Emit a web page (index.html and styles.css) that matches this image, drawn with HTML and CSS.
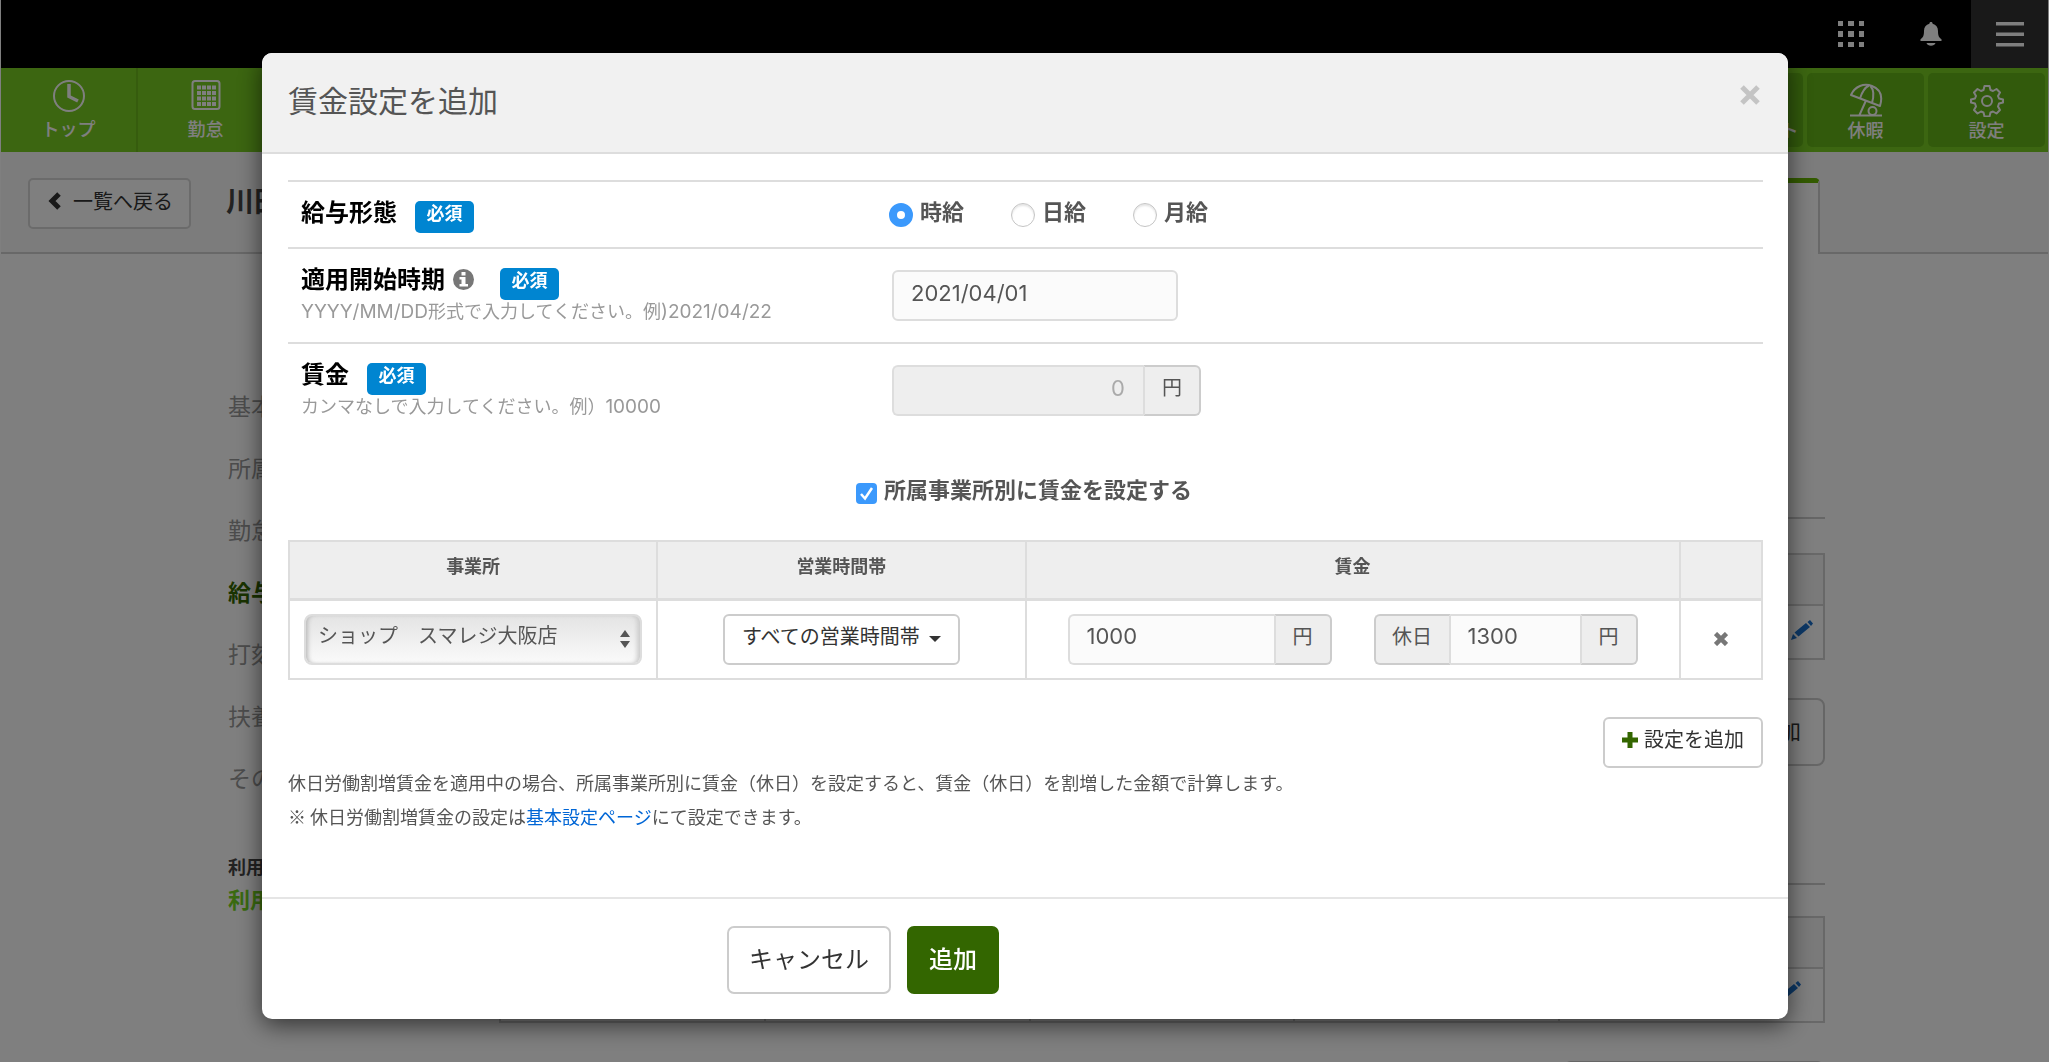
FILE: index.html
```html
<!DOCTYPE html>
<html lang="ja">
<head>
<meta charset="utf-8">
<title>賃金設定を追加</title>
<link rel="stylesheet" href="styles.css">
</head>
<body>
<div class="app">
  <header class="topbar">
    <button class="topbar-btn" type="button" aria-label="アプリ一覧">
      <svg width="26" height="26" viewBox="0 0 26 26" fill="currentColor"><path d="M0 0h5v5H0zM10 0h6v5h-6zM21 0h5v5h-5zM0 10h5v6H0zM10 10h6v6h-6zM21 10h5v6h-5zM0 21h5v5H0zM10 21h6v5h-6zM21 21h5v5h-5z"/></svg>
    </button>
    <button class="topbar-btn" type="button" aria-label="お知らせ">
      <svg width="22" height="24" viewBox="0 0 22 24" fill="currentColor"><path d="M11 0c1 0 1.600.7 1.600 1.700C16 2.500 18 5 18 9c0 4.500.8 6.500 3.500 8.200V19H.5v-1.800C3.200 15.500 4 13.500 4 9c0-4 2-6.500 5.400-7.300C9.400.7 10 0 11 0zM6.500 21h9c-.6 1.700-2.400 2.700-4.500 2.700S7.100 22.700 6.500 21z"/></svg>
    </button>
    <button class="topbar-btn topbar-menu" type="button" aria-label="メニュー">
      <svg width="28" height="25" viewBox="0 0 28 25" fill="currentColor"><path d="M0 0h28v3.500H0zM0 10.500h28V14H0zM0 21h28v3.500H0z"/></svg>
    </button>
  </header>

  <nav class="nav">
    <a class="nav-item" href="#">
      <svg width="34" height="34" viewBox="0 0 34 34" fill="none" stroke="currentColor"><circle cx="17" cy="17" r="15" stroke-width="2"/><path d="M17 5v12.500l9 4.500" stroke-width="3.500"/></svg>
      <span>トップ</span>
    </a>
    <a class="nav-item" href="#">
      <svg width="34" height="34" viewBox="0 0 34 34" fill="none" stroke="currentColor"><rect x="3.500" y="2" width="27" height="28" rx="2.500" stroke-width="2"/><path d="M8 8.500h19M8 14h19M8 19.500h19M8 25h19" stroke-width="4" stroke-dasharray="4 1"/></svg>
      <span>勤怠</span>
    </a>
    <span class="nav-space"></span>
    <a class="nav-item nav-boxed" href="#"><span class="nav-blank"></span><span>プロジェクト</span></a>
    <a class="nav-item nav-boxed" href="#">
      <svg width="34" height="34" viewBox="0 0 34 34" fill="none" stroke="currentColor" stroke-width="2" stroke-linejoin="round"><path d="M2 12C6 3 15 0 23 3s11 10 8 20z"/><path d="M11 15.500C13 9 17 4 20 2.500M23 20c2-7 2-13-1.500-17M17 17.500L10.500 32M1 32.500h32"/><circle cx="23.500" cy="28" r="4"/></svg>
      <span>休暇</span>
    </a>
    <a class="nav-item nav-boxed" href="#">
      <svg width="34" height="34" viewBox="0 0 34 34" fill="none" stroke="currentColor" stroke-width="2" stroke-linejoin="round"><path d="M14.500 3h5l1 4 2.500 1 3.500-2 3.500 3.500-2 3.500 1 2.500 4 1v3l-4 1-1 3 2 3.500-3.500 3.500-3.500-2-2.500 1-1 4h-5l-1-4-2.500-1-3.500 2L4 27l2-3.500-1-3-4-1v-3l4-1L6 13 4 9.500 7.500 6l3.500 2 2.500-1z"/><circle cx="17" cy="18" r="5"/></svg>
      <span>設定</span>
    </a>
  </nav>

  <div class="subhead">
    <button class="back" type="button">
      <svg width="13" height="18" viewBox="0 0 13 18" fill="none" stroke="currentColor" stroke-width="5"><path d="M11 2L4 9l7 7"/></svg>
      一覧へ戻る
    </button>
    <h1 class="person">川田</h1>
    <span class="tab"></span>
  </div>

  <div class="columns">
    <aside class="side">
      <ul class="side-list">
        <li><a href="#">基本情報</a></li>
        <li><a href="#">所属情報</a></li>
        <li><a href="#">勤怠情報</a></li>
        <li><a class="is-current" href="#">給与情報</a></li>
        <li><a href="#">打刻設定</a></li>
        <li><a href="#">扶養情報</a></li>
        <li><a href="#">その他</a></li>
      </ul>
      <p class="side-title">利用状況</p>
      <p class="side-state">利用中</p>
    </aside>
    <main class="content">
      <section class="block">
        <table class="list">
          <thead><tr><th></th><th></th><th></th><th></th><th></th></tr></thead>
          <tbody><tr><td></td><td></td><td></td><td></td><td><svg width="22" height="20" viewBox="0 0 22 20" fill="currentColor"><path d="M0 20l2-6 4 4zM3.500 12.500L15 3l4 4L7.500 16.500zM16.500 2L19 0l3 3.500L20 6z"/></svg></td></tr></tbody>
        </table>
        <button class="outline" type="button">設定を追加</button>
      </section>
      <section class="block">
        <table class="list list-near">
          <thead><tr><th></th><th></th><th></th><th></th><th></th></tr></thead>
          <tbody><tr><td></td><td></td><td></td><td></td><td><svg width="22" height="20" viewBox="0 0 22 20" fill="currentColor"><path d="M0 20l2-6 4 4zM3.500 12.500L15 3l4 4L7.500 16.500zM16.500 2L19 0l3 3.500L20 6z"/></svg></td></tr></tbody>
        </table>
        <button class="outline" type="button" aria-label="追加"></button>
      </section>
    </main>
  </div>
</div>

<div class="overlay">
  <form class="modal" role="dialog" aria-labelledby="modal-title">
    <header class="modal-head">
      <h2 id="modal-title">賃金設定を追加</h2>
      <button class="close" type="button" aria-label="閉じる">
        <svg width="20" height="20" viewBox="0 0 20 20" stroke="currentColor" stroke-width="5"><path d="M2 2l16 16M18 2L2 18"/></svg>
      </button>
    </header>

    <div class="modal-body">
      <div class="row">
        <div>
          <div class="row-title"><span>給与形態</span><span class="badge">必須</span></div>
        </div>
        <div class="radios">
          <label><input type="radio" name="type" checked><span>時給</span></label>
          <label><input type="radio" name="type"><span>日給</span></label>
          <label><input type="radio" name="type"><span>月給</span></label>
        </div>
      </div>
      <div class="row">
        <div>
          <div class="row-title">
            <label for="start">適用開始時期</label>
            <svg class="info" width="21" height="21" viewBox="0 0 21 21"><circle cx="10.500" cy="10.500" r="10.500" fill="#777"/><path d="M8.500 3h4v3.500h-4zM6.500 8h6v7H15v2.500H6.500V15h2v-4.500h-2z" fill="#fff"/></svg>
            <span class="badge">必須</span>
          </div>
          <p class="hint"><span class="num">YYYY/MM/DD</span>形式で入力してください。例<span class="num">)2021/04/22</span></p>
        </div>
        <div class="field"><input class="text date" id="start" type="text" value="2021/04/01"></div>
      </div>
      <div class="row">
        <div>
          <div class="row-title"><label for="wage">賃金</label><span class="badge">必須</span></div>
          <p class="hint">カンマなしで入力してください。例）<span class="num">10000</span></p>
        </div>
        <div class="field">
          <div class="group group-main"><input class="text" id="wage" type="text" value="0" disabled><span class="addon">円</span></div>
        </div>
      </div>

      <label class="check"><input type="checkbox" checked><span>所属事業所別に賃金を設定する</span></label>

      <table class="wages">
        <thead>
          <tr><th class="c-office">事業所</th><th class="c-hours">営業時間帯</th><th class="c-wage">賃金</th><th></th></tr>
        </thead>
        <tbody>
          <tr>
            <td>
              <div class="select">
                <select aria-label="事業所"><option>ショップ　スマレジ大阪店</option></select>
                <svg width="10" height="18" viewBox="0 0 10 18" fill="#555"><path d="M0 7l5-7 5 7zM0 11h10l-5 7z"/></svg>
              </div>
            </td>
            <td class="mid">
              <button class="btn" type="button">すべての営業時間帯<svg width="12" height="6" viewBox="0 0 12 6" fill="currentColor"><path d="M0 0h12L6 6z"/></svg></button>
            </td>
            <td>
              <div class="pair">
                <div class="group"><input class="text" type="text" value="1000" aria-label="賃金"><span class="addon">円</span></div>
                <div class="group"><label class="addon addon-first" for="holiday">休日</label><input class="text" id="holiday" type="text" value="1300"><span class="addon">円</span></div>
              </div>
            </td>
            <td class="mid">
              <button class="remove" type="button" aria-label="削除"><svg width="14" height="14" viewBox="0 0 14 14" stroke="currentColor" stroke-width="4.500"><path d="M1.500 1.500l11 11M12.500 1.500l-11 11"/></svg></button>
            </td>
          </tr>
        </tbody>
      </table>

      <div class="add-row">
        <button class="btn" type="button"><svg class="plus" width="16" height="16" viewBox="0 0 16 16" fill="#360"><path d="M5.500 0h5v5.500H16v5h-5.500V16h-5v-5.500H0v-5h5.500z"/></svg>設定を追加</button>
      </div>
      <div class="notes">
        <p>休日労働割増賃金を適用中の場合、所属事業所別に賃金（休日）を設定すると、賃金（休日）を割増した金額で計算します。</p>
        <p>※ 休日労働割増賃金の設定は<a href="#">基本設定ページ</a>にて設定できます。</p>
      </div>
    </div>

    <footer class="modal-foot">
      <button class="big" type="button">キャンセル</button>
      <button class="big big-primary" type="submit">追加</button>
    </footer>
  </form>
</div>
</body>
</html>
```
FILE: styles.css
```css
* { box-sizing: border-box; }

body {
  margin: 0;
  height: 100vh;
  overflow: hidden;
  color: #555;
  background: #fff;
  font-family: Inter, "Noto Sans CJK JP", sans-serif;
  font-size: 20px;
}

h1, h2, p, ul { margin: 0; padding: 0; }
ul { list-style: none; }
a { text-decoration: none; }
button, input, select { font: inherit; color: inherit; margin: 0; }
button { cursor: pointer; }
svg { display: block; flex: none; }

/* Page behind the dialog */
.app { height: 100vh; overflow: hidden; border-left: 1px solid #fff; border-right: 1px solid #fff; }

.topbar { display: flex; justify-content: flex-end; height: 68px; background: #000; }
.topbar-btn {
  display: flex; align-items: center; justify-content: center;
  width: 80px; padding: 0; border: 0; background: none; color: #fff;
}
.topbar-menu { width: 77px; background: #333; }

.nav { display: flex; gap: 4px; height: 84px; padding-right: 3px; background: #78cc22; }
.nav-item {
  display: flex; flex-direction: column; align-items: center; gap: 4px;
  width: 137px; padding-top: 11px;
  border-right: 2px solid #6cb81c;
  color: #fff; font-size: 18px; font-weight: 500; line-height: 26px;
}
.nav-item + .nav-item { margin-left: -4px; }
.nav-space { flex: 1; }
.nav-item.nav-boxed {
  width: 117px; height: 74px; margin: 5px 0 0;
  padding-top: 10px; gap: 1px;
  border: 0; border-radius: 5px; background: #64b418;
}
.nav-blank { height: 34px; }

.subhead {
  display: flex; align-items: flex-start;
  height: 102px; padding: 26px 0 0 27px;
  background: #f8f8f8; box-shadow: inset 0 -2px #d0d0d0;
}
.back {
  display: flex; align-items: center; gap: 12px;
  width: 163px; height: 51px; padding: 0 0 6px 18px;
  border: 2px solid #d6d6d6; border-radius: 5px;
  background: #fff; color: #333; white-space: nowrap;
}
.person { margin-left: 35px; color: #444; font-size: 28px; line-height: 48px; }
.tab {
  width: 540px; height: 76px; margin-left: auto; margin-right: 228px;
  border-top: 5px solid #66b600; border-right: 2px solid #d0d0d0;
  border-top-right-radius: 5px; background: #fff;
}

.columns { display: flex; }
.side { width: 498px; padding: 122px 0 0 227px; }
.side-list { font-size: 23px; line-height: 62px; }
.side-list a { color: #999; }
.side-list .is-current { color: #360; font-weight: 700; }
.side-title { margin-top: 42px; color: #444; font-size: 18px; font-weight: 700; line-height: 32px; }
.side-state { color: #74d420; font-size: 22px; font-weight: 700; line-height: 32px; }

.content { flex: 1; padding: 263px 223px 0 0; }
.block { display: flex; flex-direction: column; align-items: flex-end; padding: 34px 0 117px; border-top: 2px solid #ccc; }
.list { width: 100%; border-collapse: collapse; table-layout: fixed; }
.list th, .list td { padding: 0; border: 2px solid #d0d0d0; }
.list th { height: 51px; background: #f5f5f5; }
.list td { height: 54px; }
.list td svg { margin: 0 10px 4px auto; color: #1a70cc; }
.block + .block { padding-top: 31px; }
.list-near td svg { margin-right: 22px; margin-bottom: 8px; }
.outline {
  width: 262px; height: 68px; margin-top: 38px; padding: 0 22px 6px;
  border: 2px solid #ccc; border-radius: 8px;
  background: #fff; color: #333; font-size: 22px; text-align: right;
}

/* Dialog */
.overlay {
  position: fixed; inset: 0;
  padding: 53px 261px 43px 262px;
  background: rgba(0, 0, 0, .5);
}
.modal { border-radius: 10px; background: #fff; box-shadow: 0 6px 24px rgba(0, 0, 0, .6); }
.modal-head {
  display: flex; justify-content: space-between; align-items: flex-start;
  height: 101px; padding: 26px 28px 0 26px;
  border-bottom: 2px solid #ddd; border-radius: 10px 10px 0 0;
  background: #f1f1f1;
}
.modal-head h2 { font-size: 30px; font-weight: 400; line-height: 44px; }
.close { display: flex; margin-top: 6px; padding: 0; border: 0; background: none; color: #c4c4c4; }

.modal-body { padding: 26px 25px 67px 26px; }

.row {
  display: grid; grid-template-columns: 588px 1fr;
  padding: 15px 0 14px 13px;
  border-top: 2px solid #ddd;
}
.row-title { display: flex; align-items: flex-start; color: #000; font-size: 24px; font-weight: 700; line-height: 32px; }
.badge {
  width: 59px; height: 32px; margin: 4px 0 0 18px;
  border-radius: 5px; background: #0085d1; color: #fff;
  font-size: 18px; line-height: 26px; text-align: center;
}
.info { margin: 5px 8px 0; }
.hint { padding-bottom: 4px; color: #999; font-size: 18px; line-height: 24px; }
.hint .num { font-size: 19px; }

.radios { display: flex; gap: 47px; color: #555; font-size: 22px; font-weight: 700; line-height: 30px; }
.radios label { display: flex; gap: 7px; }
.radios input {
  appearance: none; width: 24px; height: 24px; margin-top: 6px;
  border: 1px solid #c4c4c4; border-radius: 50%;
  background: #fff; box-shadow: inset 0 2px 2px #e6e6e6;
}
.radios input:checked { border: 8px solid #3b99fc; box-shadow: none; }

.field { padding: 6px 0 0 3px; }
.text {
  height: 51px; min-width: 0; padding: 0 18px 6px 17px;
  border: 2px solid #ddd; border-radius: 6px; background: #fbfbfb; color: #555;
  font-size: 22px;
}
.date { width: 286px; }
.group { display: flex; }
.group .text { flex: 1; border-right-width: 0; border-radius: 6px 0 0 6px; }
.group-main { width: 309px; }
.group .text:disabled { background: #eee; color: #aaa; text-align: right; }
.addon {
  width: 58px; height: 51px;
  border: 2px solid #ccc; border-left-color: #ddd; border-radius: 0 6px 6px 0;
  background: #eee; font-size: 20px; line-height: 42px; text-align: center;
}
.addon-first { width: 77px; border-left-color: #ccc; border-right-color: #ddd; border-radius: 6px 0 0 6px; }
.group .addon-first + .text { border-left-width: 0; border-radius: 0; }

.check {
  display: flex; justify-content: center; gap: 7px;
  width: 338px; margin: 37px auto 34px 567px;
  font-size: 22px; font-weight: 700; line-height: 32px; white-space: nowrap;
}
.check input {
  appearance: none; flex: none; width: 21px; height: 21px; margin-top: 9px;
  border-radius: 4px;
  background: #3b99fc url("data:image/svg+xml,%3Csvg xmlns='http://www.w3.org/2000/svg' viewBox='0 0 21 21' fill='none' stroke='white' stroke-width='2.500'%3E%3Cpath d='M5 11l4 4.500L16 5'/%3E%3C/svg%3E");
}

.wages { width: 100%; border-collapse: collapse; table-layout: fixed; }
.wages th, .wages td { border: 2px solid #ddd; }
.wages th {
  height: 58px; padding: 0 0 9px; border-bottom-width: 3px;
  background: #eee; font-size: 18px; font-weight: 700;
}
.wages td { height: 80px; padding: 0 14px; }
.c-office, .c-hours { width: 25%; }
.c-wage { width: 654px; }
.mid { text-align: center; }

.select { display: grid; align-items: center; }
.select select {
  grid-area: 1 / 1; appearance: none;
  width: 100%; height: 51px; padding: 0 36px 6px 12px;
  border: 2px solid #ddd; border-radius: 8px;
  background: linear-gradient(#e4e4e4, #fafafa);
  box-shadow: inset 4px 0 4px -2px #bbb, inset -5px 0 4px -2px #ccc;
}
.select svg { grid-area: 1 / 1; justify-self: end; margin-right: 12px; pointer-events: none; }

.btn {
  display: inline-flex; align-items: center; gap: 9px;
  height: 51px; padding: 0 17px 5px;
  border: 2px solid #ccc; border-radius: 6px;
  background: #fff; color: #333; line-height: 32px; white-space: nowrap; vertical-align: middle;
}
.btn svg { margin-top: 4px; }
.btn .plus { margin: 0 -3px 0 0; }

.pair { display: grid; grid-template-columns: 264px 264px; justify-content: center; gap: 42px; }
.remove { padding: 2px 4px 6px; border: 0; background: none; color: #777; vertical-align: middle; }

.add-row { display: flex; justify-content: flex-end; margin-top: 37px; }
.notes {
  display: grid; gap: 6px;
  font-family: "Noto Sans CJK JP", sans-serif; font-size: 18px; line-height: 28px;
}
.notes a { color: #0066d6; }

.modal-foot {
  display: flex; gap: 16px;
  padding: 27px 25px 25px 465px;
  border-top: 2px solid #e5e5e5;
}
.big {
  height: 68px; padding: 0 20px 6px;
  border: 2px solid #ccc; border-radius: 7px;
  background: #fff; color: #333; font-size: 24px;
}
.big-primary { border-color: #360; background: #360; color: #fff; font-weight: 500; }
```
